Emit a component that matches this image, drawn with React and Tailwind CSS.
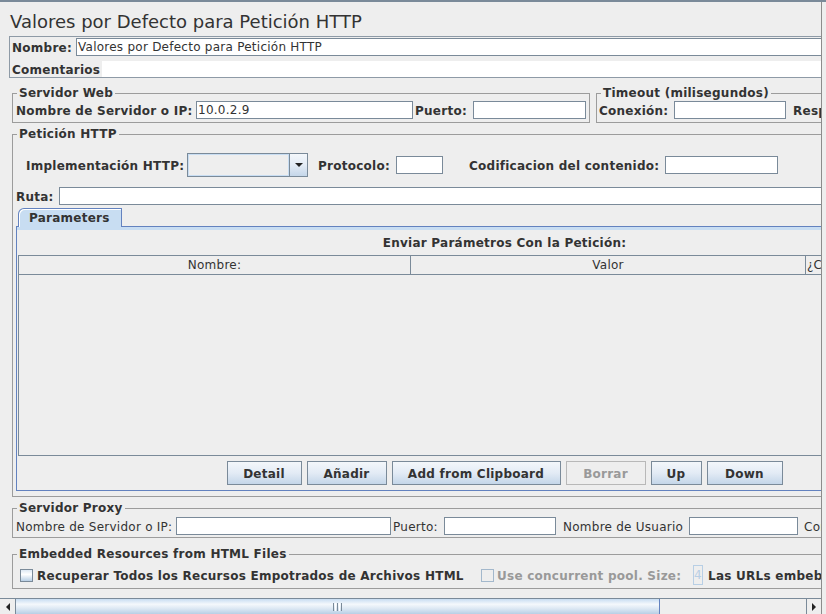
import React from "react";

const INPUT = "h-[18px] bg-white border border-[#7a8a99] shrink-0";
const ITXT = "pl-[1px] pt-[1px] leading-[15px] whitespace-nowrap overflow-hidden";
const LEGEND = "ml-[4px] px-[2px] font-bold leading-[14px] text-[12px]";
const FS = "border border-[#9c9c9c] shrink-0";
const LBL = "pt-[2px] leading-[14px] shrink-0 whitespace-nowrap";
const BTN =
  "h-[24px] pt-[1px] border border-[#7a8a99] bg-[linear-gradient(to_bottom,#f3f7fb,#e3ebf5_50%,#c4d6e9)] font-bold flex items-center justify-center shrink-0 leading-[14px]";

function Checkbox({ disabled }) {
  return disabled ? (
    <div className="w-[13px] h-[13px] shrink-0 border border-[#a3b8cc] bg-[#eeeeee]" />
  ) : (
    <div className="w-[13px] h-[13px] shrink-0 border border-[#7a8a99] bg-[linear-gradient(to_bottom,#dde8f3,#ffffff_40%,#b8cfe5)]" />
  );
}

function Tri({ dir }) {
  const pts = {
    down: "0,0 8,0 4,4",
    left: "4,0 4,8 0,4",
    right: "0,0 0,8 4,4",
  }[dir];
  const w = dir === "down" ? 8 : 4;
  const h = dir === "down" ? 4 : 8;
  return (
    <svg width={w} height={h} viewBox={`0 0 ${w} ${h}`}>
      <polygon points={pts} fill="#222" />
    </svg>
  );
}

export default function App() {
  return (
    <div className="w-[826px] h-[614px] overflow-hidden bg-[#eeeeee] text-[#333333] text-[12px] leading-[14px] tracking-[0.25px] font-['DejaVu_Sans',sans-serif] flex flex-col">
      <div className="h-[2px] shrink-0 bg-[#7a8a99]" />
      <div className="flex-1 min-h-0 flex">
        <div className="w-[822px] shrink-0 border-r border-[#8c8c8c] flex flex-col">
          <div className="flex-1 min-h-0 overflow-hidden">
            <div className="w-[1100px] flex flex-col">
              {/* Title */}
              <div className="h-[29px] pt-[10px] pl-[10px] text-[18px] leading-[19px] tracking-normal whitespace-nowrap">
                Valores por Defecto para Petición HTTP
              </div>

              {/* Name panel */}
              <div className="mt-[5px] ml-[9px] h-[42px] border border-[#8e9aa6] pt-[1px] pl-[2px] flex flex-col">
                <div className="flex items-center h-[18px]">
                  <span className={LBL + " w-[64px] font-bold"}>Nombre:</span>
                  <div className={INPUT + " flex-1 " + ITXT}>
                    Valores por Defecto para Petición HTTP
                  </div>
                </div>
                <div className="flex items-center h-[16px] mt-[5px]">
                  <span className={LBL + " w-[90px] font-bold"}>Comentarios</span>
                  <div className="flex-1 h-[16px] bg-white" />
                </div>
              </div>

              {/* Servidor Web + Timeout */}
              <div className="flex mt-[8px] pl-[12px]">
                <fieldset className={FS + " w-[578px] pt-[1px] pb-[3px]"}>
                  <legend className={LEGEND}>Servidor Web</legend>
                  <div className="flex items-center h-[18px] pl-[3px]">
                    <span className={LBL + " w-[180px] font-bold"}>Nombre de Servidor o IP:</span>
                    <div className={INPUT + " w-[217px] " + ITXT}>10.0.2.9</div>
                    <span className={LBL + " w-[60px] pl-[2px] font-bold"}>Puerto:</span>
                    <div className={INPUT + " w-[113px]"} />
                  </div>
                </fieldset>
                <fieldset className={FS + " ml-[6px] w-[420px] pt-[1px] pb-[3px]"}>
                  <legend className={LEGEND}>Timeout (milisegundos)</legend>
                  <div className="flex items-center h-[18px] pl-[2px]">
                    <span className={LBL + " w-[75px] font-bold"}>Conexión:</span>
                    <div className={INPUT + " w-[112px]"} />
                    <span className={LBL + " ml-[7px] w-[86px] font-bold"}>Respuesta:</span>
                    <div className={INPUT + " w-[112px]"} />
                  </div>
                </fieldset>
              </div>

              {/* Petición HTTP */}
              <div className="pl-[12px] mt-[4px]">
                <fieldset className={FS + " w-[1000px] pt-[12px] pb-[5px]"}>
                  <legend className={LEGEND}>Petición HTTP</legend>
                  <div className="flex items-center h-[24px] pl-[13px]">
                    <span className={LBL + " w-[161px] font-bold"}>Implementación HTTP:</span>
                    <div className="w-[121px] h-[24px] shrink-0 flex border border-[#7a8a99]">
                      <div className="flex-1 border border-[#c8ddf2] bg-[#eeeeee]" />
                      <div className="w-[18px] border-l border-[#7a8a99] bg-[linear-gradient(to_bottom,#f3f7fb,#e3ebf5_50%,#c4d6e9)] flex items-center justify-center">
                        <Tri dir="down" />
                      </div>
                    </div>
                    <span className={LBL + " ml-[10px] w-[78px] font-bold"}>Protocolo:</span>
                    <div className={INPUT + " w-[47px]"} />
                    <span className={LBL + " ml-[26px] w-[196px] font-bold"}>Codificacion del contenido:</span>
                    <div className={INPUT + " w-[113px]"} />
                  </div>
                  <div className="flex items-center h-[18px] mt-[10px] pl-[3px]">
                    <span className={LBL + " w-[43px] font-bold"}>Ruta:</span>
                    <div className={INPUT + " flex-1"} />
                  </div>

                  {/* Tabs */}
                  <div className="mt-[3px] ml-[3px] w-[977px] flex flex-col">
                    <div className="flex pl-[2px]">
                      <div className="relative z-10 -mb-[1px] w-[104px] h-[19px] rounded-tl-[6px] border-t border-l border-r border-[#6382bf] bg-[#c8ddf2] shadow-[inset_1px_1px_0_#ffffff] font-bold pl-[10px] pt-[1px] leading-[17px]">
                        Parameters
                      </div>
                    </div>
                    <div className="h-[265px] border border-[#6382bf] flex flex-col">
                      <div className="h-[3px] shrink-0 bg-[#c8ddf2]" />
                      <div className="flex-1 flex flex-col pt-[5px] pb-[5px]">
                        <div className="h-[14px] pt-[1px] text-center font-bold whitespace-nowrap">
                          Enviar Parámetros Con la Petición:
                        </div>
                        <div className="mt-[6px] ml-[1px] w-[973px] h-[201px] border-l border-b border-[#7a8a99] flex flex-col">
                          <div className="flex h-[20px] shrink-0">
                            <div className="w-[392px] border-t border-b border-r border-[#7a8a99] text-center pt-[1px] leading-[17px]">
                              Nombre:
                            </div>
                            <div className="w-[395px] border-t border-b border-r border-[#7a8a99] text-center pt-[1px] leading-[17px]">
                              Valor
                            </div>
                            <div className="w-[93px] border-t border-b border-r border-[#7a8a99] pl-[1px] pt-[1px] leading-[17px] whitespace-nowrap overflow-hidden">
                              ¿Codificar?
                            </div>
                            <div className="flex-1 border-t border-b border-r border-[#7a8a99] text-center pt-[1px] leading-[17px] whitespace-nowrap overflow-hidden">
                              ¿Incluir Equals?
                            </div>
                          </div>
                          <div className="flex-1" />
                        </div>
                        <div className="mt-[5px] h-[24px] flex justify-center gap-[5px]">
                          <div className={BTN + " w-[75px]"}>Detail</div>
                          <div className={BTN + " w-[80px]"}>Añadir</div>
                          <div className={BTN + " w-[169px]"}>Add from Clipboard</div>
                          <div className="h-[24px] w-[80px] pt-[1px] shrink-0 border border-[#b8b8b8] bg-[#eeeeee] text-[#999999] font-bold flex items-center justify-center">
                            Borrar
                          </div>
                          <div className={BTN + " w-[51px]"}>Up</div>
                          <div className={BTN + " w-[76px]"}>Down</div>
                        </div>
                      </div>
                    </div>
                  </div>
                </fieldset>
              </div>

              {/* Servidor Proxy */}
              <div className="pl-[12px] mt-[4px]">
                <fieldset className={FS + " w-[1000px] pt-[2px] pb-[2px]"}>
                  <legend className={LEGEND}>Servidor Proxy</legend>
                  <div className="flex items-center h-[18px] pl-[3px] whitespace-nowrap">
                    <span className={LBL + " w-[160px]"}>Nombre de Servidor o IP:</span>
                    <div className={INPUT + " w-[215px]"} />
                    <span className={LBL + " w-[53px] pl-[2px]"}>Puerto:</span>
                    <div className={INPUT + " w-[112px]"} />
                    <span className={LBL + " w-[133px] pl-[7px]"}>Nombre de Usuario</span>
                    <div className={INPUT + " w-[109px]"} />
                    <span className={LBL + " w-[80px] pl-[6px]"}>Contraseña</span>
                    <div className={INPUT + " w-[109px]"} />
                  </div>
                </fieldset>
              </div>

              {/* Embedded resources */}
              <div className="pl-[12px] mt-[9px]">
                <fieldset className={FS + " w-[1000px] pt-[3px] pb-[2px]"}>
                  <legend className={LEGEND}>Embedded Resources from HTML Files</legend>
                  <div className="flex items-center h-[22px] pl-[7px] whitespace-nowrap font-bold">
                    <Checkbox />
                    <span className={LBL + " ml-[4px] w-[444px]"}>
                      Recuperar Todos los Recursos Empotrados de Archivos HTML
                    </span>
                    <Checkbox disabled />
                    <span className={LBL + " ml-[3px] w-[196px] text-[#999999]"}>
                      Use concurrent pool. Size:
                    </span>
                    <div className="w-[10px] h-[20px] shrink-0 border border-[#b8cfe5] overflow-hidden font-normal text-[#b8cfe5] pt-[1px] leading-[17px]">
                      4
                    </div>
                    <span className={LBL + " ml-[5px]"}>
                      Las URLs embebidas deben coincidir a:
                    </span>
                  </div>
                </fieldset>
              </div>
            </div>
          </div>

          {/* Horizontal scrollbar */}
          <div className="h-[16px] shrink-0 flex border-t border-[#7a8a99] bg-[#eeeeee]">
            <div className="w-[16px] shrink-0 border-r border-[#7a8a99] flex items-center justify-center">
              <Tri dir="left" />
            </div>
            <div className="w-[644px] shrink-0 border-r border-[#6382bf] bg-[linear-gradient(to_bottom,#c8ddf2,#f4f8fc_35%,#dbe7f3_65%,#b8cfe5)] flex items-center justify-center">
              <div className="flex gap-[1px]">
                <div className="w-[1px] h-[8px] bg-[#7a8a99]" />
                <div className="w-[1px] h-[8px] bg-[#ffffff]" />
                <div className="w-[1px] h-[8px] bg-[#7a8a99]" />
                <div className="w-[1px] h-[8px] bg-[#ffffff]" />
                <div className="w-[1px] h-[8px] bg-[#7a8a99]" />
              </div>
            </div>
            <div className="flex-1" />
            <div className="w-[15px] shrink-0 border-l border-[#7a8a99] flex items-center justify-center">
              <Tri dir="right" />
            </div>
          </div>
        </div>
        <div className="flex-1" />
      </div>
    </div>
  );
}
